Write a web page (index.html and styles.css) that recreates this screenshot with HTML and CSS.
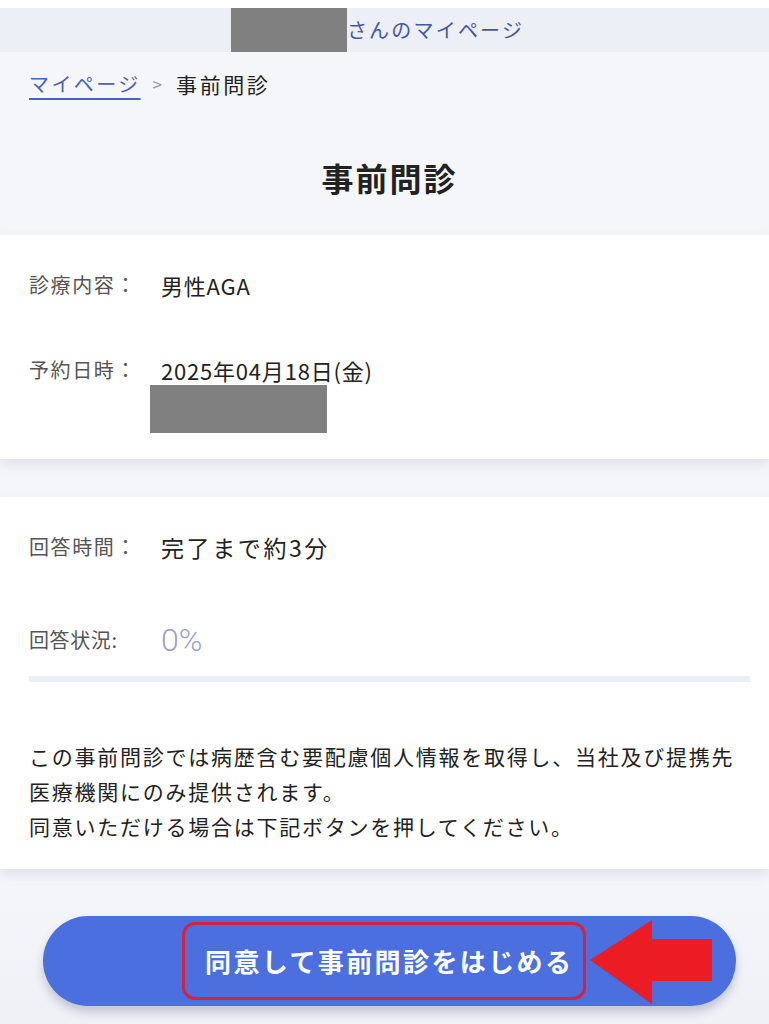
FILE: index.html
```html
<!DOCTYPE html>
<html lang="ja">
<head>
<meta charset="utf-8">
<title>事前問診</title>
<link rel="stylesheet" href="styles.css">
</head>
<body>
<div class="topgap"></div>
<header class="header">
  <span class="mask-name"></span><span class="header-text">さんのマイページ</span>
</header>
<main class="page">
  <nav class="crumb">
    <a class="crumb-link" href="#">マイページ</a><span class="crumb-sep">&gt;</span><span class="crumb-current">事前問診</span>
  </nav>
  <h1 class="title">事前問診</h1>

  <section class="card card-info">
    <div class="row">
      <div class="label">診療内容：</div>
      <div class="value">男性AGA</div>
    </div>
    <div class="row row-date">
      <div class="label">予約日時：</div>
      <div class="value">
        <div>2025年04月18日(金)</div>
        <div class="mask-time"></div>
      </div>
    </div>
  </section>

  <section class="card card-status">
    <div class="row">
      <div class="label">回答時間：</div>
      <div class="value">完了まで約3分</div>
    </div>
    <div class="row row-progress">
      <div class="label">回答状況:</div>
      <div class="value percent">0%</div>
    </div>
    <div class="progress"><div class="progress-fill" style="width:0%"></div></div>
    <p class="notice">この事前問診では病歴含む要配慮個人情報を取得し、当社及び提携先<br>医療機関にのみ提供されます。<br>同意いただける場合は下記ボタンを押してください。</p>
  </section>

  <div class="btn-wrap">
    <button class="start-btn" type="button">
      <span class="btn-text">同意して事前問診をはじめる</span>
      <svg class="arrow" width="124" height="84" viewBox="0 0 124 84" aria-hidden="true">
        <polygon points="0,40 62,0 62,19 122,19 122,61 62,61 62,84" fill="#ec1c24"/>
      </svg>
    </button>
  </div>
</main>
</body>
</html>
```

FILE: styles.css
```css
* { box-sizing: border-box; }
html, body { margin: 0; padding: 0; }
body {
  font-family: "Noto Sans CJK JP", "Noto Sans", sans-serif;
  background: #f2f3f8;
  color: #222;
  width: 769px;
  height: 1024px;
  overflow: hidden;
}
.topgap { height: 8px; background: #ffffff; }
.header {
  height: 44px;
  background: #eceff6;
  display: flex;
  justify-content: center;
  align-items: center;
  padding-right: 14px;
}
.mask-name { width: 116px; height: 44px; background: #808080; }
.header-text {
  font-size: 20px;
  letter-spacing: 2.2px;
  color: #4557a4;
  line-height: 44px;
}
.page {
  background: linear-gradient(#f5f6fa, #f5f6fa 820px, #eef0f6);
  padding-bottom: 40px;
}
.crumb {
  padding: 17px 0 0 29px;
  line-height: 30px;
  font-size: 20px;
  display: flex;
  align-items: center;
}
.crumb-link {
  color: #4a62c0;
  letter-spacing: 2.4px;
  text-decoration: underline;
  text-decoration-thickness: 2px;
  text-underline-offset: 6px;
}
.crumb-sep { color: #9a9a9a; font-size: 17px; margin: 0 14px 0 12px; }
.crumb-current { letter-spacing: 2.6px; color: #222; font-size: 21px; }
.title {
  margin: 56px 0 36px;
  text-align: center;
  font-size: 32px;
  line-height: 44px;
  font-weight: 700;
  letter-spacing: 2px;
  color: #222;
  padding-left: 10px;
}
.card {
  background: #ffffff;
  box-shadow: 0 6px 12px rgba(70, 80, 130, 0.12);
  padding-left: 29px;
}
.card-info { padding-top: 28px; padding-bottom: 26px; }
.card-status { margin-top: 38px; padding-top: 28px; padding-bottom: 25px; }
.row { display: flex; align-items: flex-start; line-height: 44px; }
.row-date { margin-top: 41px; }
.label {
  width: 132px;
  flex: none;
  font-size: 20px;
  letter-spacing: 1.6px;
  color: #555;
}
.value { font-size: 22px; letter-spacing: 0.8px; color: #222; }
.card-status .value { font-size: 23px; letter-spacing: 2.6px; }
.mask-time {
  width: 177px;
  height: 48px;
  background: #808080;
  margin: -7px 0 0 -11px;
}
.row-progress { margin-top: 46px; line-height: 50px; }
.row-progress .label { line-height: 50px; letter-spacing: 0.6px; }
.card-status .percent {
  font-size: 32px;
  color: #9aa3c7;
  letter-spacing: 0;
  font-family: Roboto, "Noto Sans", sans-serif;
  font-weight: 300;
}
.progress {
  margin-top: 11px;
  width: 721px;
  height: 6px;
  background: #e9eef8;
}
.progress-fill { height: 100%; background: #4b6fdf; }
.notice {
  margin: 57px 0 0;
  font-size: 21px;
  line-height: 35px;
  letter-spacing: 1.75px;
  color: #222;
}
.btn-wrap { padding-top: 47px; padding-left: 43px; }
.start-btn {
  position: relative;
  width: 693px;
  height: 90px;
  border: none;
  border-radius: 45px;
  background: #4b6fdf;
  box-shadow: 0 6px 10px rgba(50, 60, 110, 0.25);
  display: flex;
  align-items: center;
  padding: 0 0 0 139px;
  font-family: inherit;
}
.btn-text {
  display: inline-block;
  border: 3px solid #d8213c;
  border-radius: 13px;
  height: 78px;
  line-height: 72px;
  padding: 0 10px 0 20px;
  color: #ffffff;
  font-size: 26px;
  font-weight: 700;
  letter-spacing: 2.4px;
}
.arrow {
  position: absolute;
  left: 547px;
  top: 4px;
}
```
